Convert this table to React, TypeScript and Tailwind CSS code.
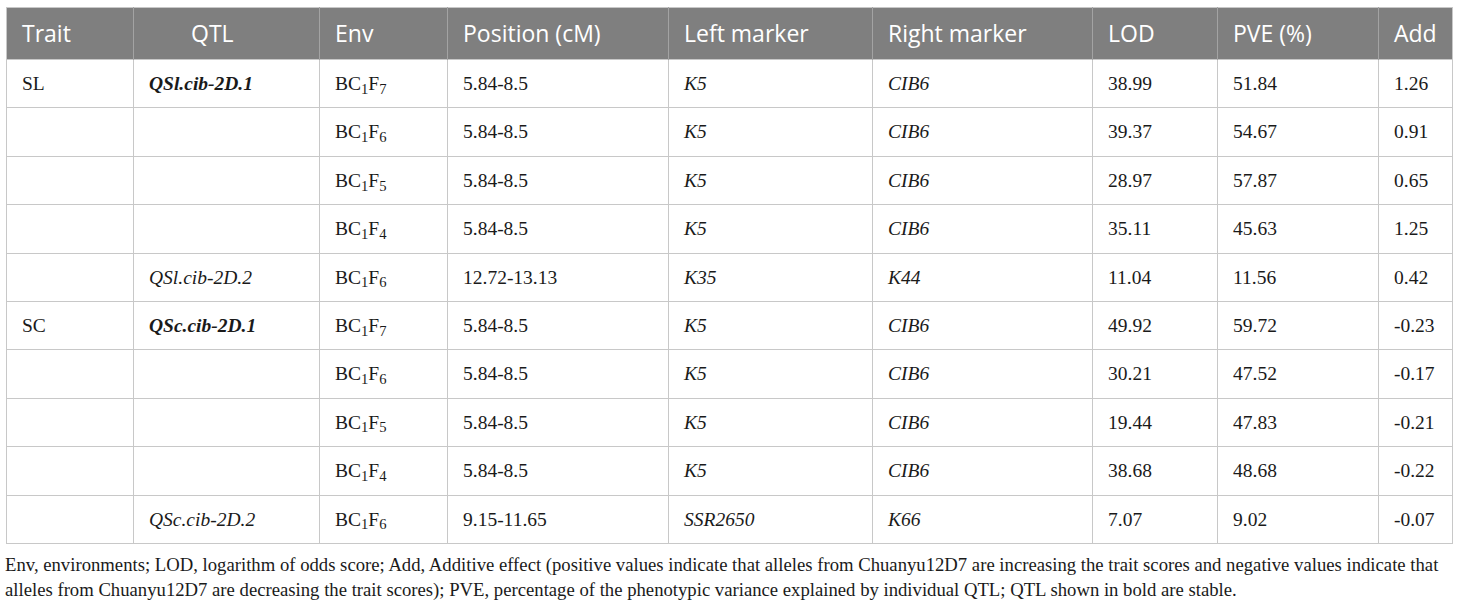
const rows: {
  trait?: string;
  qtl?: string;
  bold?: boolean;
  gen: string;
  pos: string;
  left: string;
  right: string;
  lod: string;
  pve: string;
  add: string;
}[] = [
  { trait: "SL", qtl: "QSl.cib-2D.1", bold: true, gen: "7", pos: "5.84-8.5", left: "K5", right: "CIB6", lod: "38.99", pve: "51.84", add: "1.26" },
  { gen: "6", pos: "5.84-8.5", left: "K5", right: "CIB6", lod: "39.37", pve: "54.67", add: "0.91" },
  { gen: "5", pos: "5.84-8.5", left: "K5", right: "CIB6", lod: "28.97", pve: "57.87", add: "0.65" },
  { gen: "4", pos: "5.84-8.5", left: "K5", right: "CIB6", lod: "35.11", pve: "45.63", add: "1.25" },
  { qtl: "QSl.cib-2D.2", gen: "6", pos: "12.72-13.13", left: "K35", right: "K44", lod: "11.04", pve: "11.56", add: "0.42" },
  { trait: "SC", qtl: "QSc.cib-2D.1", bold: true, gen: "7", pos: "5.84-8.5", left: "K5", right: "CIB6", lod: "49.92", pve: "59.72", add: "-0.23" },
  { gen: "6", pos: "5.84-8.5", left: "K5", right: "CIB6", lod: "30.21", pve: "47.52", add: "-0.17" },
  { gen: "5", pos: "5.84-8.5", left: "K5", right: "CIB6", lod: "19.44", pve: "47.83", add: "-0.21" },
  { gen: "4", pos: "5.84-8.5", left: "K5", right: "CIB6", lod: "38.68", pve: "48.68", add: "-0.22" },
  { qtl: "QSc.cib-2D.2", gen: "6", pos: "9.15-11.65", left: "SSR2650", right: "K66", lod: "7.07", pve: "9.02", add: "-0.07" },
];

const headers = ["Trait", "QTL", "Env", "Position (cM)", "Left marker", "Right marker", "LOD", "PVE (%)", "Add"];
const widths = [127, 186, 128, 221, 204, 220, 125, 161, 74];

export default function App() {
  return (
    <div className="w-[1460px] h-[605px] bg-white pt-[7px] pl-[6px] overflow-hidden">
      <table className="table-fixed border-collapse w-[1446px] border border-[#c8c8c8]">
        <colgroup>
          {widths.map((w, i) => (
            <col key={i} style={{ width: w }} />
          ))}
        </colgroup>
        <thead>
          <tr className="h-[52px] bg-[#7f7f7f]">
            {headers.map((h, i) => (
              <th
                key={h}
                className={`text-left font-normal text-white text-[23px] font-['Open_Sans',sans-serif] border-l border-[#a3a3a3] first:border-l-0 ${
                  i === 1 ? "pl-[57px]" : "pl-[15px]"
                }`}
              >
                {h}
              </th>
            ))}
          </tr>
        </thead>
        <tbody className="font-['Liberation_Serif',serif] text-[19.5px] text-[#1a1a1a]">
          {rows.map((r, i) => (
            <tr key={i} className="h-[48.4px]">
              <td className="border border-[#c8c8c8] pl-[15px]">{r.trait}</td>
              <td className={`border border-[#c8c8c8] pl-[15px] italic ${r.bold ? "font-bold" : ""}`}>{r.qtl}</td>
              <td className="border border-[#c8c8c8] pl-[15px]">
                BC<sub>1</sub>F<sub>{r.gen}</sub>
              </td>
              <td className="border border-[#c8c8c8] pl-[15px]">{r.pos}</td>
              <td className="border border-[#c8c8c8] pl-[15px] italic">{r.left}</td>
              <td className="border border-[#c8c8c8] pl-[15px] italic">{r.right}</td>
              <td className="border border-[#c8c8c8] pl-[15px]">{r.lod}</td>
              <td className="border border-[#c8c8c8] pl-[15px]">{r.pve}</td>
              <td className="border border-[#c8c8c8] pl-[15px]">{r.add}</td>
            </tr>
          ))}
        </tbody>
      </table>
      <p className="mt-[8px] -ml-[1px] font-['Liberation_Serif',serif] text-[18.7px] leading-[25px] text-[#1a1a1a] whitespace-nowrap">
        Env, environments; LOD, logarithm of odds score; Add, Additive effect (positive values indicate that alleles from Chuanyu12D7 are increasing the trait scores and negative values indicate that
        <br />
        alleles from Chuanyu12D7 are decreasing the trait scores); PVE, percentage of the phenotypic variance explained by individual QTL; QTL shown in bold are stable.
      </p>
    </div>
  );
}
